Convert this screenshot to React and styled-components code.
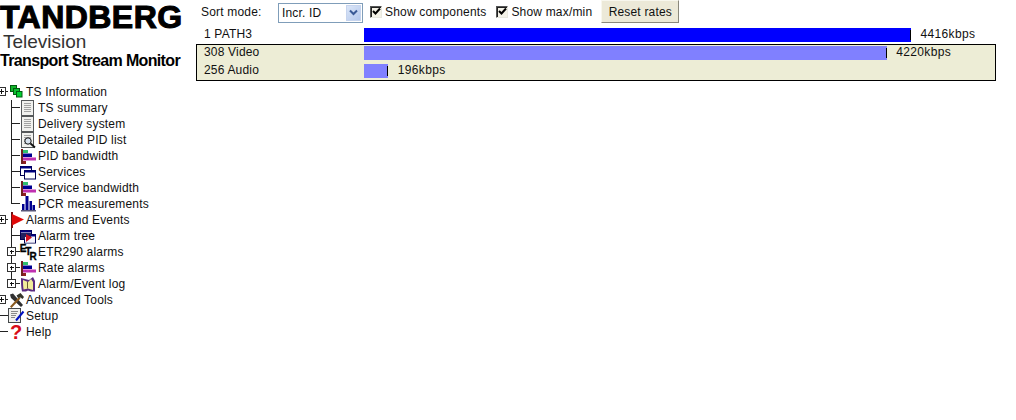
import React from "react";
import styled, { createGlobalStyle } from "styled-components";

const GlobalStyle = createGlobalStyle`
  html, body {
    margin: 0;
    padding: 0;
    background: #fff;
    color: #111;
    font-family: "Liberation Sans", Arial, sans-serif;
    font-size: 12px;
    letter-spacing: 0.18px;
  }
`;

const Doc = () => (
  <>
    <rect x="1.5" y="0.5" width="12" height="15" fill="#f1f1ee" stroke="#55585a" />
    <path d="M4 3.5h7M4 5.5h7M4 7.5h7M4 9.5h7M4 11.5h7" stroke="#a2a2a2" />
  </>
);

const Windows = ({ children }) => (
  <>
    <rect x="0.5" y="2.5" width="11" height="9" fill="#fff" stroke="#000050" />
    <rect x="0.5" y="2.5" width="11" height="2" fill="#000080" />
    <rect x="4.5" y="6.5" width="11" height="8.5" fill="#fff" stroke="#000050" />
    <rect x="4.5" y="6.5" width="11" height="2" fill="#000080" />
    {children}
  </>
);

const Rates = () => (
  <>
    <rect x="1" y="1" width="2" height="15" fill="#702020" />
    <rect x="3" y="2" width="5" height="3" fill="#30c070" />
    <rect x="3" y="5.5" width="9" height="3.5" fill="#000090" />
    <rect x="3" y="9.5" width="13" height="3" fill="#c030b0" />
    <rect x="3" y="13" width="3" height="3" fill="#902020" />
  </>
);

const icons = {
  cubes: (
    <g stroke="#005a10">
      <rect x="2.5" y="1.5" width="6" height="6" fill="#12b52a" />
      <rect x="5.5" y="4.5" width="6" height="6" fill="#0cc030" />
      <rect x="8.5" y="7.5" width="5.5" height="5.5" fill="#00d030" />
    </g>
  ),
  doc: <Doc />,
  search: (
    <>
      <Doc />
      <circle cx="8" cy="9" r="3.2" fill="#d8e2ee" stroke="#111" />
      <path d="M10.5 11.5l4.5 4" stroke="#111" strokeWidth="1.8" />
    </>
  ),
  rates: <Rates />,
  windows: <Windows />,
  pcr: (
    <>
      <path d="M2 8h2.5v6H2zM5.5 0h3v14h-3zM9.5 5h2.5v9H9.5zM12.5 9H15v5h-2.5z" fill="#000090" />
      <rect x="1" y="14" width="15" height="1.5" fill="#555577" />
    </>
  ),
  flag: (
    <>
      <rect x="3" y="0" width="2" height="16" fill="#701010" />
      <path d="M4 2l12 5.5L4 13.5z" fill="#e00808" />
    </>
  ),
  alarmTree: (
    <Windows>
      <rect x="1" y="5" width="10" height="6" fill="#202060" />
      <rect x="5" y="9" width="10" height="5.5" fill="#f4f4ff" />
      <path d="M6 6l6 3.5L6 14z" fill="#d01020" />
    </Windows>
  ),
  etr: (
    <text
      x="-0.2"
      y="8"
      fontFamily="'Liberation Sans', sans-serif"
      fontWeight="700"
      fontSize="10"
      fill="#000"
      stroke="#000"
      strokeWidth="0.3"
    >
      E
      <tspan dx="-1.5" dy="3">T</tspan>
      <tspan dx="-2" dy="4.5">R</tspan>
    </text>
  ),
  log: (
    <>
      <path d="M1 2c0 5 0 9 1 13.5h4l2-1 3 1h4V5l-2-4-4 3z" fill="#5a2a80" />
      <path d="M3 4c0 3 0 6 .6 9.5L8 12.5l5 1.5V6l-2-3-3 3z" fill="#f2ec9c" />
      <path d="M7.5 6v6.5" stroke="#6a5a30" />
    </>
  ),
  tools: (
    <>
      <path d="M2 2.5l3-1 10 11.5-2 2L3 6z" fill="#303030" />
      <path d="M2 14.5L11 5l1.5 1.5L3.5 16z" fill="#8a5a20" />
      <path d="M8.5 3.5l4-2.5L16 5l-1.5 2-2-1.5L10 6z" fill="#35352a" />
    </>
  ),
  setup: (
    <>
      <rect x="0.5" y="0.5" width="12" height="14" fill="#f1f1ee" stroke="#44484a" />
      <path d="M3 3.5h7M3 5.5h6M3 7.5h5M3 9.5h4" stroke="#8a8a8a" />
      <path d="M8 12.5l7.5-9" stroke="#0010c0" strokeWidth="2" />
    </>
  ),
  help: (
    <text x="2" y="15" fontFamily="'Liberation Sans', sans-serif" fontWeight="700" fontSize="20" fill="#d80c18">?</text>
  ),
};

const treeData = [
  { label: "TS Information", icon: "cubes", line: "plus" },
  { label: "TS summary", icon: "doc", line: "tee" },
  { label: "Delivery system", icon: "doc", line: "tee" },
  { label: "Detailed PID list", icon: "search", line: "tee" },
  { label: "PID bandwidth", icon: "rates", line: "tee" },
  { label: "Services", icon: "windows", line: "tee" },
  { label: "Service bandwidth", icon: "rates", line: "tee" },
  { label: "PCR measurements", icon: "pcr", line: "end" },
  { label: "Alarms and Events", icon: "flag", line: "plus" },
  { label: "Alarm tree", icon: "alarmTree", line: "tee" },
  { label: "ETR290 alarms", icon: "etr", line: "teePlus" },
  { label: "Rate alarms", icon: "rates", line: "teePlus" },
  { label: "Alarm/Event log", icon: "log", line: "endPlus" },
  { label: "Advanced Tools", icon: "tools", line: "plus" },
  { label: "Setup", icon: "setup", line: "dash" },
  { label: "Help", icon: "help", line: "dash" },
];

const Connector = ({ line }) => {
  if (line === "plus" || line === "dash") {
    return (
      <svg width="8" height="16" shapeRendering="crispEdges">
        <path d="M0 7.5h8" stroke="#222" />
        {line === "plus" && (
          <>
            <rect x="-3.5" y="3.5" width="9" height="8" fill="#fff" stroke="#333" />
            <path d="M0 7.5h4M1.5 5v5" stroke="#111" />
          </>
        )}
      </svg>
    );
  }
  const ends = line === "end" || line === "endPlus";
  const boxed = line === "teePlus" || line === "endPlus";
  return (
    <svg width="20" height="16" shapeRendering="crispEdges">
      <path d={`M11.5 0v${ends ? 8 : 16}M11.5 7.5H20`} stroke="#222" />
      {boxed && (
        <>
          <rect x="7.5" y="3.5" width="8" height="8" fill="#fff" stroke="#333" />
          <path d="M9.5 7.5h4M11.5 5.5v4" stroke="#111" />
        </>
      )}
    </svg>
  );
};

const SCALE = 547 / 4416;

const Bar = ({ rate, light }) => (
  <>
    <BarFill $light={light} style={{ width: rate * SCALE }}>
      <MaxTick />
    </BarFill>
    <Rate>{rate}kbps</Rate>
  </>
);

const Check = () => (
  <CheckBox>
    <svg width="9" height="9" viewBox="0 0 9 9">
      <path d="M1 4l2.5 2.5L8 1.5" fill="none" stroke="#000" strokeWidth="2" />
    </svg>
  </CheckBox>
);

const App = () => {
  return (
    <Page>
      <GlobalStyle />
      <Sidebar>
        <Logo>
          <Brand>TANDBERG</Brand>
          <Division>Television</Division>
          <Product>Transport Stream Monitor</Product>
        </Logo>
        <Tree>
          {treeData.map((item) => (
            <TreeRow key={item.label}>
              <Connector line={item.line} />
              <TreeIcon width="16" height="16" viewBox="0 0 16 16">
                {icons[item.icon]}
              </TreeIcon>
              <TreeLabel>{item.label}</TreeLabel>
            </TreeRow>
          ))}
        </Tree>
      </Sidebar>
      <Main>
        <Toolbar>
          <FieldLabel>Sort mode:</FieldLabel>
          <SelectBox>
            <SelectValue>Incr. ID</SelectValue>
            <SelectArrow>
              <svg width="9" height="7" viewBox="0 0 9 7">
                <path d="M1 1.5l3.5 3.5L8 1.5" fill="none" stroke="#3a5a96" strokeWidth="2" />
              </svg>
            </SelectArrow>
          </SelectBox>
          <CheckLabel>
            <Check />
            Show components
          </CheckLabel>
          <CheckLabel>
            <Check />
            Show max/min
          </CheckLabel>
          <ResetButton>Reset rates</ResetButton>
        </Toolbar>
        <Row>
          <RowName>1 PATH3</RowName>
          <Bar rate={4416} />
        </Row>
        <Group>
          <Row>
            <RowName>308 Video</RowName>
            <Bar rate={4220} light />
          </Row>
          <Row>
            <RowName>256 Audio</RowName>
            <Bar rate={196} light />
          </Row>
        </Group>
      </Main>
    </Page>
  );
};

const Page = styled.div`
  display: flex;
  width: 1016px;
  height: 420px;
  overflow: hidden;
`;
const Sidebar = styled.div`
  width: 196px;
  flex-shrink: 0;
`;
const Logo = styled.div`
  display: flex;
  flex-direction: column;
  height: 84px;
  color: #000;
  overflow: hidden;
  white-space: nowrap;
`;
const Brand = styled.div`
  font-size: 32px;
  line-height: 28px;
  font-weight: bold;
  letter-spacing: 0.45px;
  -webkit-text-stroke: 1.1px #000;
  margin-top: 3px;
`;
const Division = styled.div`
  font-size: 19px;
  line-height: 20px;
  letter-spacing: 0;
  color: #333;
  margin: 1px 0 0 3px;
`;
const Product = styled.div`
  font-size: 16px;
  line-height: 18px;
  font-weight: bold;
  letter-spacing: -0.65px;
`;
const Tree = styled.div`
  display: flex;
  flex-direction: column;
`;
const TreeRow = styled.div`
  display: flex;
  align-items: center;
  height: 16px;
`;
const TreeIcon = styled.svg`
  flex-shrink: 0;
  overflow: visible;
`;
const TreeLabel = styled.span`
  margin-left: 2px;
  line-height: 16px;
  white-space: nowrap;
`;
const Main = styled.div`
  width: 800px;
  flex-shrink: 0;
`;
const Toolbar = styled.div`
  display: flex;
  align-items: center;
  height: 23px;
  margin-bottom: 5px;
  padding-left: 5px;
`;
const FieldLabel = styled.span`
  width: 77px;
`;
const SelectBox = styled.div`
  display: flex;
  align-items: center;
  justify-content: space-between;
  box-sizing: border-box;
  width: 85px;
  height: 20px;
  margin-top: 2px;
  border: 1px solid #7f9db9;
  padding: 1px;
`;
const SelectValue = styled.span`
  padding-left: 2px;
`;
const SelectArrow = styled.span`
  display: flex;
  align-items: center;
  justify-content: center;
  width: 15px;
  height: 16px;
  background: linear-gradient(135deg, #dbe6f8, #b4c8ec);
  border: 1px solid #c6d4ee;
  box-sizing: border-box;
`;
const CheckLabel = styled.label`
  display: flex;
  align-items: center;
  gap: 3px;
  margin-left: 7px;
  margin-right: 3px;
  white-space: nowrap;
`;
const CheckBox = styled.span`
  display: flex;
  align-items: center;
  justify-content: center;
  box-sizing: border-box;
  width: 12px;
  height: 12px;
  background: #f4f2e8;
  border: 1px solid;
  border-color: #555 #e8e8e0 #e8e8e0 #555;
  box-shadow: inset 1px 1px 0 #222;
`;
const ResetButton = styled.button`
  box-sizing: border-box;
  width: 78px;
  height: 23px;
  margin-left: 6px;
  padding: 0;
  background: #ece9d8;
  color: #111;
  font: inherit;
  letter-spacing: inherit;
  border: 1px solid;
  border-color: #f8f7ee #8a887c #8a887c #f8f7ee;
`;
const Row = styled.div`
  display: flex;
  align-items: flex-start;
  height: 14px;
  padding-left: 8px;
  line-height: 12px;
  white-space: nowrap;
`;
const RowName = styled.span`
  width: 160px;
  flex-shrink: 0;
`;
const BarFill = styled.div`
  position: relative;
  height: 14px;
  flex-shrink: 0;
  background: ${(props) => (props.$light ? "#8080ff" : "#0000ff")};
`;
const MaxTick = styled.span`
  position: absolute;
  right: 0;
  top: 2px;
  bottom: 2px;
  width: 1px;
  background: #000;
`;
const Rate = styled.span`
  margin-left: 9.5px;
  letter-spacing: 0.35px;
`;
const Group = styled.div`
  display: flex;
  flex-direction: column;
  gap: 4px;
  box-sizing: border-box;
  height: 37px;
  margin-top: 2px;
  padding: 1px 0 2px;
  background: #ededd6;
  border: 1px solid #000;
  ${Row} {
    padding-left: 7px;
  }
`;

export default App;
